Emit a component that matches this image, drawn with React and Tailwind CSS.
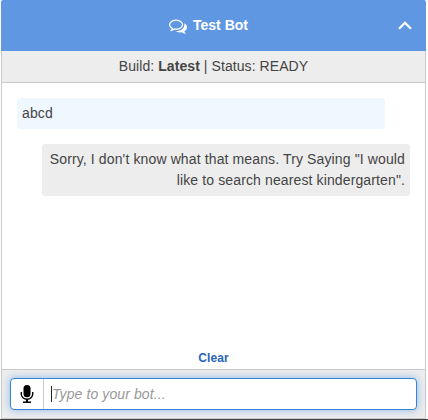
function CommentsIcon() {
  return (
    <svg width="18" height="18" viewBox="0 0 1792 1792" fill="currentColor" aria-hidden="true">
      <path d="M704 384q-153 0-286 52t-211.5 141-78.5 191q0 82 53 158t149 132l97 56-35 84q34-20 62-39l44-31 53 10q78 14 153 14 153 0 286-52t211.5-141 78.5-191-78.5-191-211.5-141-286-52zm0-128q191 0 353.5 68.5t256.5 186.5 94 257-94 257-256.5 186.5-353.5 68.5q-86 0-176-16-124 88-278 128-36 9-86 16h-3q-11 0-20.5-8t-11.5-21q-1-3-1-6.5t.5-6.5 2-6l2.5-5 3.5-5.5 4-5 4.5-5 4-4.5q5-6 23-25t26-29.5 22.5-29 25-38.5 20.5-44q-124-72-195-177t-71-224q0-139 94-257t256.5-186.5 353.5-68.5zm822 1169q10 24 20.5 44t25 38.5 22.5 29 26 29.5 23 25q1 1 4 4.5t4.5 5 4 5 3.5 5.5l2.5 5 2 6 .5 6.5-1 6.5q-3 14-13 22t-22 7q-50-7-86-16-154-40-278-128-90 16-176 16-271 0-472-132 58 4 88 4 161 0 309-45t264-129q125-92 192-212t67-254q0-77-23-152 129 71 204 178t75 230q0 120-71 224.5t-195 176.5z" />
    </svg>
  );
}

function ChevronUp() {
  return (
    <svg width="14" height="9" viewBox="0 0 14 9" fill="none" stroke="currentColor" strokeWidth="2.2" aria-hidden="true">
      <path d="M1 7.7 7 1.7l6 6" />
    </svg>
  );
}

function MicIcon() {
  return (
    <svg width="14" height="18" viewBox="0 0 14 18" fill="none" stroke="#000" aria-hidden="true">
      <rect x="3.5" y="0" width="7" height="12.2" rx="3.5" fill="#000" stroke="none" />
      <path d="M1.3 7v2.3a5.7 4.9 0 0 0 11.4 0V7" strokeWidth="1.4" />
      <path d="M7 14v3" strokeWidth="2" />
      <path d="M3 17.2h8" strokeWidth="1.5" />
    </svg>
  );
}

export default function App() {
  return (
    <div className="h-[420px] w-[428px] overflow-hidden bg-white font-['Liberation_Sans',Arial,sans-serif] text-[14px] leading-[21px] text-[#444]">
      <div className="ml-px flex h-[419px] w-[425px] flex-col">
        <header className="flex h-[51px] shrink-0 items-center rounded-t-[2px] bg-[#5f97e2] pl-[168px] pr-[14px] text-white">
          <CommentsIcon />
          <h1 className="ml-[6px] flex-1 text-[14px] font-bold">Test Bot</h1>
          <button aria-label="Collapse">
            <ChevronUp />
          </button>
        </header>
        <div className="flex min-h-0 flex-1 flex-col border-x border-b border-[#c8c9ca]">
          <div className="h-8 shrink-0 border-b border-[#c8c9ca] bg-[#ededed] pt-[5px] text-center tracking-[0.07px]">
            Build: <b>Latest</b> | Status: READY
          </div>
          <main className="flex min-h-0 flex-1 flex-col px-[15px] pt-[15px]">
            <div className="h-[31px] w-[368px] rounded-[3px] bg-[#f0f8ff] p-[5px] tracking-[0.12px]">abcd</div>
            <div className="mt-[15px] h-[52px] w-[368px] self-end rounded-[3px] bg-[#ededed] px-[5px] py-[5px] text-right tracking-[0.125px]">
              Sorry, I don't know what that means. Try Saying "I would like to search nearest kindergarten".
            </div>
            <button className="mt-auto mb-px self-center text-[12px] leading-[19px] font-bold tracking-[0.1px] text-[#2a66b8]">
              Clear
            </button>
          </main>
          <footer className="h-[49px] shrink-0 border-t border-[#c8c9ca] bg-[#ededed] px-2 pt-2">
            <div className="flex h-8 w-[407px] rounded-[4px] border border-[#3385db] bg-white shadow-[0_0_8px_rgba(82,148,226,0.6)]">
              <div className="flex w-[33px] items-center justify-center border-r border-[#ccc]">
                <MicIcon />
              </div>
              <div className="flex flex-1 items-center pl-[7px] tracking-[0.1px] italic text-[#999]">
                <span className="h-4 w-px bg-[#222]" />
                <span>Type to your bot...</span>
              </div>
            </div>
          </footer>
        </div>
      </div>
      <div className="h-px bg-[#444]" />
    </div>
  );
}
